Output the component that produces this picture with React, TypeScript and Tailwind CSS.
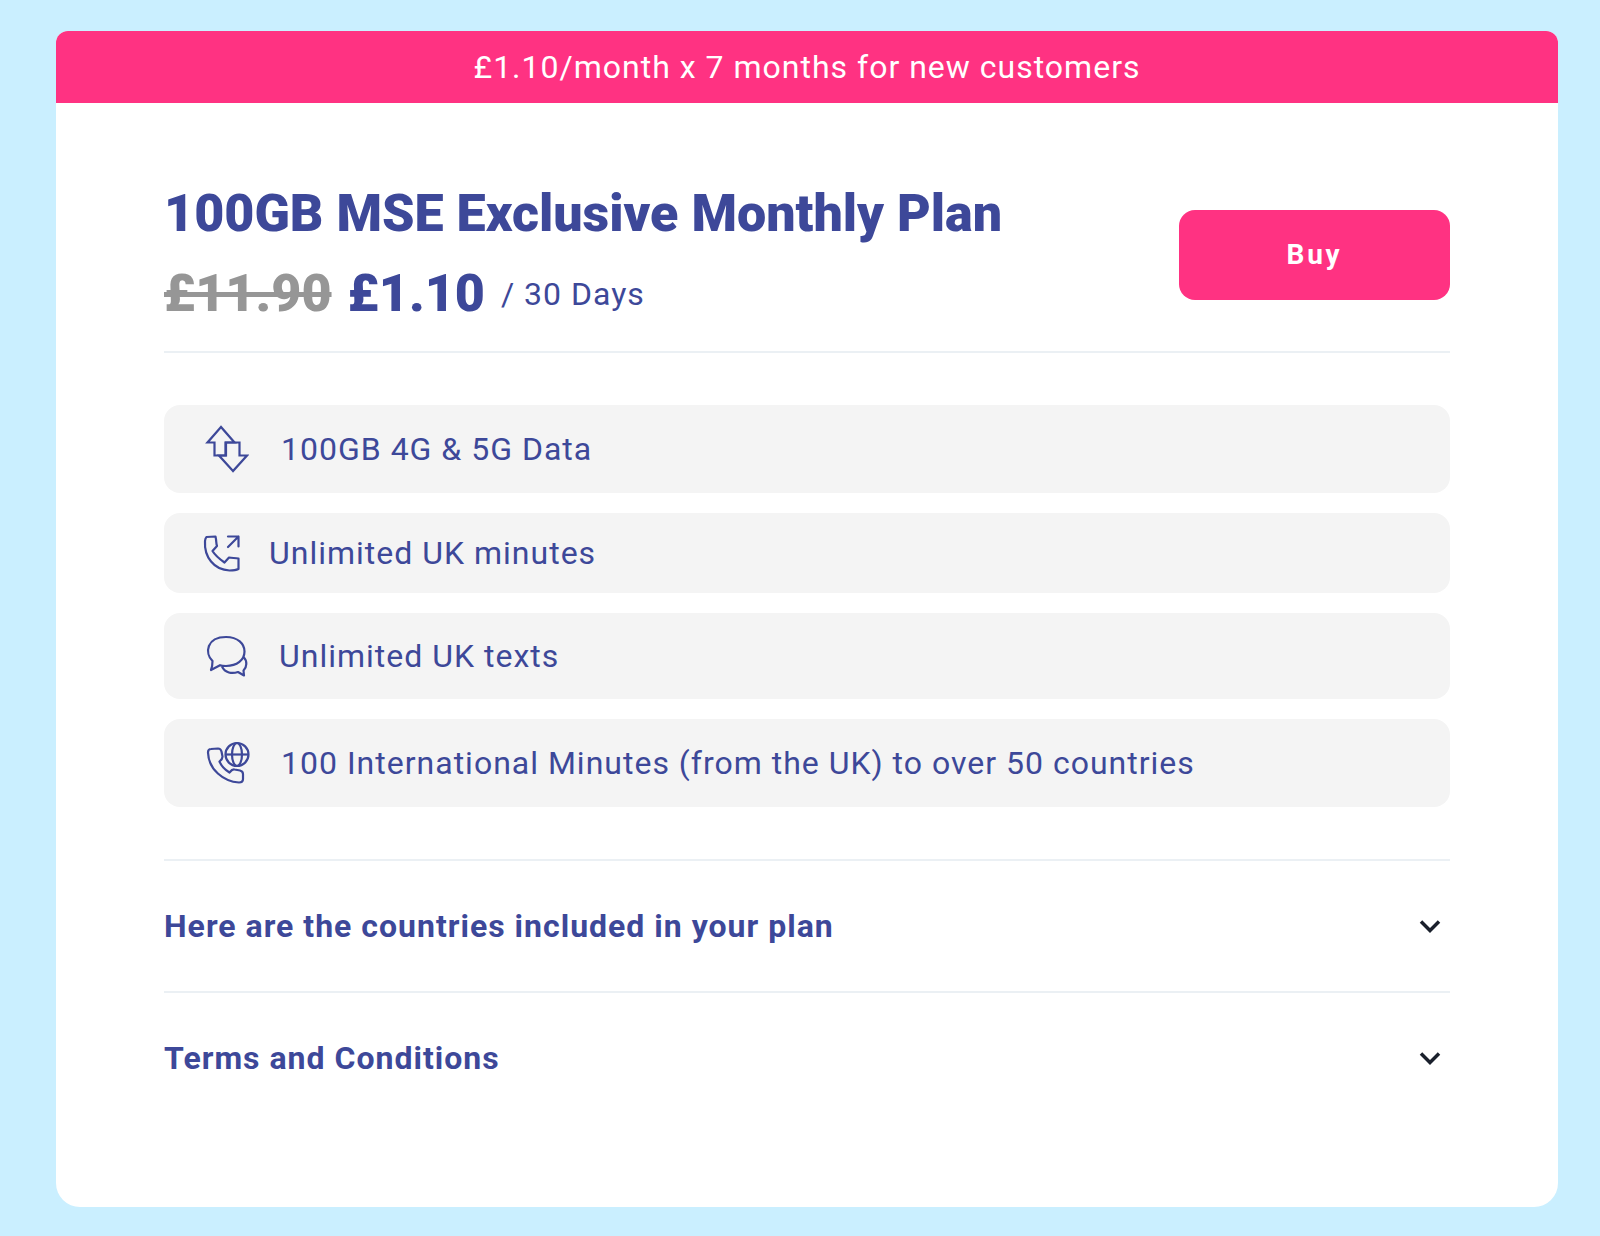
import type { ReactNode } from "react";

type Feature = {
  label: string;
  rowClass: string;
  icon: ReactNode;
};

function DataIcon() {
  return (
    <svg width="44" height="48" viewBox="0 0 44 48" fill="none" stroke="currentColor" strokeWidth="2.2" aria-hidden="true">
      <path d="M16 2 2.500 17.500H9.500V30.500H20.500V17.500H29.500L16 2Z" />
      <path d="M28 46 14 30.500h7V17.500h13.500V30.500H42L28 46Z" />
    </svg>
  );
}

function CallIcon() {
  return (
    <svg width="38" height="38" viewBox="0 0 38 38" fill="none" stroke="currentColor" strokeWidth="2.2" strokeLinecap="round" strokeLinejoin="round" aria-hidden="true">
      <path d="M3.500 3 12.500 2.500c1 4 .5 7 1.500 9.500L9.500 17c3 5 7 8 12 11.500l4.500-5c3 .7 6 .3 9.500 1V35c-2 1-5 1.500-9 1.500C11 36 1 23 2 7c.2-2 .5-3 1.500-4Z" />
      <path d="M25 13 35.500 2.500M25 2.500h10.500v10" />
    </svg>
  );
}

function TextsIcon() {
  return (
    <svg className="overflow-visible" width="42" height="42" viewBox="-1 0 42 42" fill="none" stroke="currentColor" strokeWidth="2.2" strokeLinejoin="round" aria-hidden="true">
      <path d="M6.500 26C-1.500 18 .5 2 20 2c12 0 18.500 7 18.500 14.500C38.500 25 31 31 20 31c-2 0-4 0-6-.8L5 35c1.200-3 1.500-5.500 1.500-9Z" />
      <path d="M37.500 22c4 4 3.500 10 0 13.500L38 40.500l-6-3.500C26 39 19 38 16 31.500" />
    </svg>
  );
}

function InternationalIcon() {
  return (
    <svg className="overflow-visible" width="44" height="44" viewBox="-1 0 44 44" fill="none" stroke="currentColor" strokeWidth="2.2" strokeLinejoin="round" aria-hidden="true">
      <path d="M5 8 12 7.500c2 0 3 1 3.500 3l1 5c.2 2-.5 3-3 5 2 5 5 8 10 11 2-2.500 3-3.500 5-3l5.500 1c2 .5 3 1.500 3 3.500v5c0 2-1.500 3.500-4 3.500C17.500 40.500 2.500 28.500 2 11.500c0-2 1-3.500 3-3.500Z" />
      <circle cx="31" cy="13.500" r="11.500" />
      <ellipse cx="31" cy="13.500" rx="5" ry="11.500" />
      <path d="M19.500 13.500h23" />
    </svg>
  );
}

const features: Feature[] = [
  { label: "100GB 4G & 5G Data", rowClass: "min-h-[88px] gap-8 pl-[41px]", icon: <DataIcon /> },
  { label: "Unlimited UK minutes", rowClass: "min-h-20 gap-7 pl-[39px]", icon: <CallIcon /> },
  { label: "Unlimited UK texts", rowClass: "min-h-[86px] gap-8 pl-[41px]", icon: <TextsIcon /> },
  {
    label: "100 International Minutes (from the UK) to over 50 countries",
    rowClass: "min-h-[88px] gap-8 pl-[41px]",
    icon: <InternationalIcon />,
  },
];

function Accordion({ title }: { title: string }) {
  return (
    <button
      type="button"
      aria-expanded="false"
      className="flex w-full items-center justify-between border-t-2 border-[#ebf0f4] py-[45px] pr-2 text-left text-[32px] leading-10 font-bold tracking-[1px]"
    >
      {title}
      <svg width="24" height="24" viewBox="0 0 24 24" fill="none" stroke="#1a202c" strokeWidth="3.5" aria-hidden="true">
        <path d="m3 7.500 9 9 9-9" />
      </svg>
    </button>
  );
}

export default function App() {
  return (
    <div className="min-h-screen bg-[#caefff] pt-[31px] pr-[42px] pb-[29px] pl-14 font-['Roboto',sans-serif] text-[#3d4899]">
      <main className="overflow-hidden rounded-t-xl rounded-b-3xl bg-white pb-[84px]">
        {/* Offer banner */}
        <p className="bg-[#ff3282] px-6 py-4 text-center text-[32px] leading-10 tracking-[1px] text-white">
          £1.10/month x 7 months for new customers
        </p>

        <div className="px-[108px]">
          {/* Plan name, price and buy button */}
          <header className="flex items-center justify-between gap-8 border-b-2 border-[#ebf0f4] pt-[71px] pb-[15px]">
            <div className="pb-0.5">
              <h1 className="text-[52px] leading-20 font-black">100GB MSE Exclusive Monthly Plan</h1>
              <p className="flex items-center gap-4 text-[52px] leading-20 font-black">
                <s className="text-[#969696]">£11.90</s>
                <span>£1.10</span>
                <span className="text-[32px] font-normal tracking-[1px]">/ 30 Days</span>
              </p>
            </div>
            <button type="button" className="h-[90px] w-[271px] shrink-0 rounded-2xl bg-[#ff3282] text-[28px] font-bold tracking-widest text-white">
              Buy
            </button>
          </header>

          {/* What the plan includes */}
          <ul className="flex flex-col gap-5 py-[52px]">
            {features.map((feature) => (
              <li key={feature.label} className={`flex items-center rounded-2xl bg-[#f4f4f4] pr-6 text-[32px] leading-10 tracking-[1px] ${feature.rowClass}`}>
                {feature.icon}
                {feature.label}
              </li>
            ))}
          </ul>

          <Accordion title="Here are the countries included in your plan" />
          <Accordion title="Terms and Conditions" />
        </div>
      </main>
    </div>
  );
}
